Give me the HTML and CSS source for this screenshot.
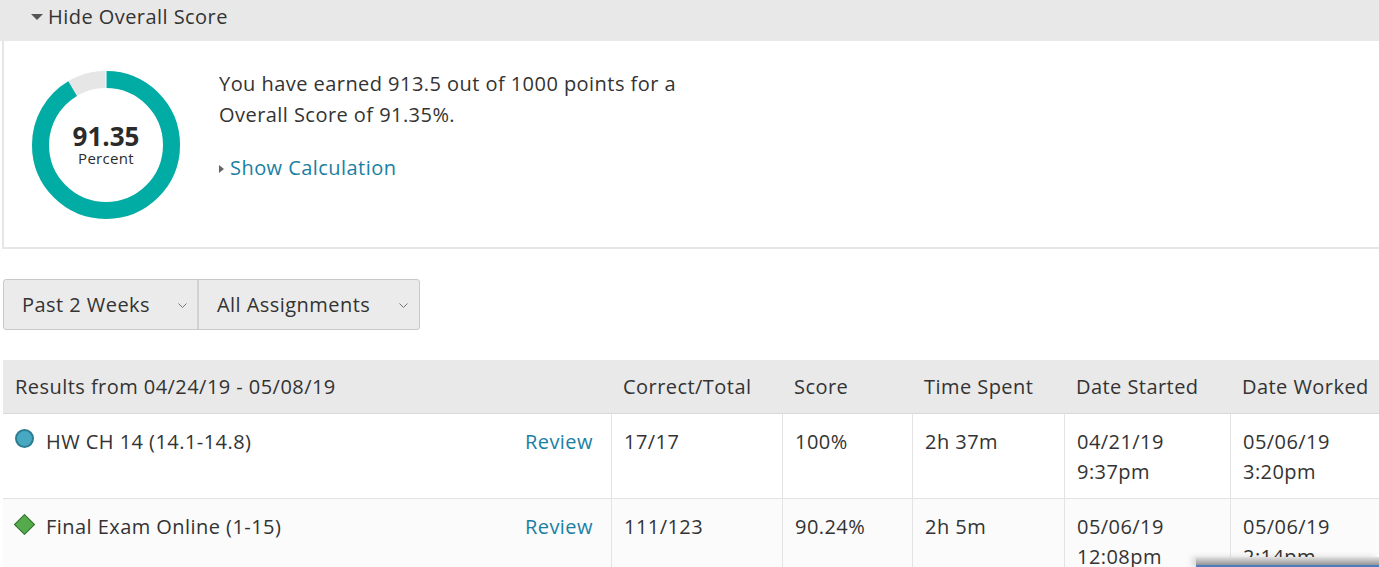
FILE: index.html
```html
<!DOCTYPE html>
<html lang="en">
<head>
    <meta charset="UTF-8">
    <title>Results</title>
    <link rel="stylesheet" href="styles.css">
</head>
<body>
    <div class="score-toggle"><span class="caret-down"></span>Hide Overall Score</div>
    <div class="score-box">
        <div class="donut">
            <svg width="148" height="148" viewBox="0 0 148 148">
                <circle cx="74" cy="74" r="65.5" fill="none" stroke="#e6e6e6" stroke-width="17"/>
                <circle cx="74" cy="74" r="65.5" fill="none" stroke="#00aca4" stroke-width="17"
                        stroke-dasharray="375.9 411.6" transform="rotate(-90 74 74)"/>
                <line x1="74" y1="0" x2="74" y2="17" stroke="#fff" stroke-width="1"/>
            </svg>
            <div class="donut-label">
                <div class="donut-num">91.35</div>
                <div class="donut-unit">Percent</div>
            </div>
        </div>
        <div class="score-text">
            <p>You have earned 913.5 out of 1000 points for a<br>Overall Score of 91.35%.</p>
            <a class="calc-link" href="#"><span class="caret-right"></span>Show Calculation</a>
        </div>
    </div>

    <div class="filters">
        <div class="select first">Past 2 Weeks
            <svg class="chev" width="9" height="5" viewBox="0 0 9 5"><polyline points="0.5,0.5 4.5,4.5 8.5,0.5" fill="none" stroke="#777" stroke-width="1"/></svg>
        </div>
        <div class="select second">All Assignments
            <svg class="chev" width="9" height="5" viewBox="0 0 9 5"><polyline points="0.5,0.5 4.5,4.5 8.5,0.5" fill="none" stroke="#777" stroke-width="1"/></svg>
        </div>
    </div>

    <div class="results">
        <div class="row head">
            <div class="cell">Results from 04/24/19 - 05/08/19</div>
            <div class="cell">Correct/Total</div>
            <div class="cell">Score</div>
            <div class="cell">Time Spent</div>
            <div class="cell">Date Started</div>
            <div class="cell">Date Worked</div>
        </div>
        <div class="row">
            <div class="cell name">
                <span class="icon-hw"></span>
                <span class="title">HW CH 14 (14.1-14.8)</span>
                <a class="review" href="#">Review</a>
            </div>
            <div class="cell">17/17</div>
            <div class="cell">100%</div>
            <div class="cell">2h 37m</div>
            <div class="cell">04/21/19<br>9:37pm</div>
            <div class="cell">05/06/19<br>3:20pm</div>
        </div>
        <div class="row alt">
            <div class="cell name">
                <span class="icon-exam"></span>
                <span class="title">Final Exam Online (1-15)</span>
                <a class="review" href="#">Review</a>
            </div>
            <div class="cell">111/123</div>
            <div class="cell">90.24%</div>
            <div class="cell">2h 5m</div>
            <div class="cell">05/06/19<br>12:08pm</div>
            <div class="cell">05/06/19<br>2:14pm</div>
        </div>
    </div>

    <div class="peek"></div>
</body>
</html>
```

FILE: styles.css
```css
body {
    margin: 0;
    background: #fff;
    font-family: "Open Sans", "Liberation Sans", sans-serif;
    font-size: 20px;
    line-height: 30px;
    letter-spacing: 0.45px;
    color: #333;
    overflow: hidden;
}
a {
    color: #1a80a3;
    text-decoration: none;
}
.score-toggle {
    background: #e8e8e8;
    height: 39px;
    padding: 2px 0 0 31px;
    display: flex;
    align-items: flex-start;
}
.caret-down {
    width: 0;
    height: 0;
    border-left: 6px solid transparent;
    border-right: 6px solid transparent;
    border-top: 6px solid #555;
    margin: 12px 5px 0 0;
}
.score-box {
    margin-left: 2px;
    border: 2px solid #e6e6e6;
    border-top: none;
    border-right: none;
    padding: 30px 0 28px 28px;
    display: flex;
    align-items: flex-start;
}
.donut {
    position: relative;
    width: 148px;
    height: 148px;
}
.donut svg {
    display: block;
}
.donut-label {
    position: absolute;
    inset: 0;
    padding-top: 52px;
    text-align: center;
    color: #2b2b2b;
    letter-spacing: 0;
}
.donut-num {
    font-size: 26px;
    font-weight: bold;
    line-height: 26px;
}
.donut-unit {
    font-size: 15px;
    line-height: 18px;
    letter-spacing: 0.3px;
}
.score-text {
    margin: -3px 0 0 39px;
}
.score-text p {
    margin: 0;
    line-height: 31px;
}
.calc-link {
    display: flex;
    align-items: center;
    margin-top: 23px;
}
.caret-right {
    width: 0;
    height: 0;
    border-top: 4.5px solid transparent;
    border-bottom: 4.5px solid transparent;
    border-left: 5px solid #666;
    margin: 1px 6px 0 0;
}
.filters {
    margin: 30px 0 0 3px;
    display: inline-flex;
    border: 1px solid #c9c9c9;
    border-radius: 3px;
    background: #ebebeb;
    height: 49px;
}
.select {
    display: flex;
    align-items: center;
    justify-content: space-between;
    padding: 0 10px 0 18px;
    box-sizing: border-box;
}
.select.first {
    width: 195px;
    border-right: 2px solid #d2d2d2;
}
.select.second {
    width: 220px;
    padding-right: 11px;
}
.chev {
    margin-top: 2px;
}
.results {
    margin: 30px 0 0 3px;
}
.row {
    display: grid;
    grid-template-columns: 608px 171px 130px 152px 166px 1fr;
    border-bottom: 1px solid #e3e3e3;
}
.row.head {
    background: #e9e9e9;
    border-bottom-color: #d9d9d9;
}
.row.head .cell {
    padding: 12px 12px 11px 12px;
    border-left: none;
    min-height: 0;
}
.row.alt {
    background: #fbfbfb;
}
.cell {
    padding: 13px 12px 11px 12px;
    border-left: 1px solid #e3e3e3;
    white-space: nowrap;
    min-height: 60px;
}
.row .cell:first-child {
    border-left: none;
}
.cell.name {
    display: flex;
    align-items: flex-start;
    padding-right: 18px;
}
.title {
    flex: 1;
}
.icon-hw {
    width: 19px;
    height: 19px;
    border-radius: 50%;
    background: #47a8c1;
    border: 2px solid #2c7c92;
    box-sizing: border-box;
    margin: 2px 12px 0 0;
    flex: none;
}
.icon-exam {
    width: 15px;
    height: 15px;
    background: #55aa4c;
    border: 1.5px solid #33702f;
    box-sizing: border-box;
    transform: rotate(45deg);
    margin: 5px 14px 0 2px;
    flex: none;
}
.peek {
    position: fixed;
    left: 1196px;
    top: 557px;
    width: 183px;
    height: 10px;
    background: linear-gradient(#e2e2e2, #9a9a9a 75%, #4d7dbd 80%, #4d7dbd);
    box-shadow: -4px 0 6px rgba(0,0,0,0.15);
}
```
